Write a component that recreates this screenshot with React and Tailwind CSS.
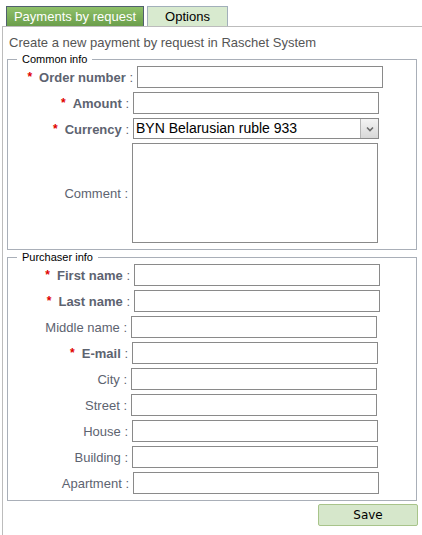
import React from 'react';

const commonRows = [
  { label: 'Order number', required: true, left: 137 },
  { label: 'Amount', required: true, left: 133 },
];

const purchaserRows = [
  { label: 'First name', required: true, left: 134 },
  { label: 'Last name', required: true, left: 134 },
  { label: 'Middle name', required: false, left: 131 },
  { label: 'E-mail', required: true, left: 132 },
  { label: 'City', required: false, left: 131 },
  { label: 'Street', required: false, left: 131 },
  { label: 'House', required: false, left: 132 },
  { label: 'Building', required: false, left: 132 },
  { label: 'Apartment', required: false, left: 133 },
];

const Label = ({ text, required, width, className = '' }) => (
  <div
    className={`shrink-0 flex items-center justify-end pt-[2px] pr-[4px] text-[13px] text-[#5d6370] ${className}`}
    style={{ width }}
  >
    {required && <span className="text-[#e00000] font-bold text-[12px] mr-[7px] -mt-[2px]">*</span>}
    <span className={required ? 'font-bold' : ''}>{text}</span>
    <span>&nbsp;:</span>
  </div>
);

const Row = ({ label, required, left }) => (
  <div className="flex h-[22px] leading-[20px]">
    <Label text={label} required={required} width={left - 8} />
    <input type="text" className="w-[246px] h-[22px] border border-[#8a8a8a] bg-white outline-none" />
  </div>
);

const Fieldset = ({ legend, children }) => (
  <fieldset className="ml-[4px] w-[410px] border border-[#a9afb8] pb-[6px]">
    <legend className="ml-[9px] px-[5px] text-[11px] leading-[14px] text-black">{legend}</legend>
    <div className="flex flex-col gap-[4px]">{children}</div>
  </fieldset>
);

export default function App() {
  return (
    <div className="w-[422px] h-[535px] bg-white overflow-hidden font-['Liberation_Sans',Arial,sans-serif]">
      {/* Tabs */}
      <div className="flex items-end gap-[3px] pl-[6px] pt-[6px] h-[26px]">
        <div className="w-[138px] h-[20px] border border-b-0 border-[#50606e] bg-gradient-to-b from-[#8fc169] to-[#6b9e4b] text-white text-[13px] leading-[19px] text-center">
          Payments by request
        </div>
        <div className="w-[81px] h-[20px] border border-b-0 border-[#a2afba] bg-[#d8eacf] text-black text-[13px] leading-[19px] text-center">
          Options
        </div>
      </div>

      {/* Panel */}
      <div className="ml-[2px] h-[509px] border-l border-t border-[#bcbcbc]">
        <p className="pl-[6px] pt-[8px] text-[13px] leading-[15px] text-[#555]">
          Create a new payment by request in Raschet System
        </p>
        <div className="h-[2px]" />

        <Fieldset legend="Common info">
          {commonRows.map((r) => (
            <Row key={r.label} {...r} />
          ))}
          <div className="flex h-[21px] leading-[20px]">
            <Label text="Currency" required width={125} />
            <div className="w-[246px] h-[21px] border border-[#8a8a8a] bg-white flex items-stretch">
              <div className="flex-1 pl-[2px] text-[14px] leading-[19px] text-black">BYN Belarusian ruble 933</div>
              <div className="w-[18px] border-l border-[#b5b5b5] bg-gradient-to-b from-[#f4f4f4] to-[#d8d8d8] flex items-center justify-center">
                <svg width="8" height="6" viewBox="0 0 8 6">
                  <path d="M1 1.5 L4 4.5 L7 1.5" fill="none" stroke="#6b6b6b" strokeWidth="1.6" />
                </svg>
              </div>
            </div>
          </div>
          <div className="flex h-[100px]">
            <Label text="Comment" width={124} className="leading-[20px]" />
            <textarea className="w-[246px] h-[100px] border border-[#8a8a8a] bg-white outline-none resize-none" />
          </div>
        </Fieldset>

        <Fieldset legend="Purchaser info">
          {purchaserRows.map((r) => (
            <Row key={r.label} {...r} />
          ))}
        </Fieldset>

        <button className="mt-[3px] ml-[315px] w-[100px] h-[22px] rounded-[2px] border border-[#a8c48a] bg-[#d6e7cb] text-black text-[12px] font-['DejaVu_Sans',Verdana,sans-serif] leading-[20px]">
          Save
        </button>
      </div>
    </div>
  );
}
